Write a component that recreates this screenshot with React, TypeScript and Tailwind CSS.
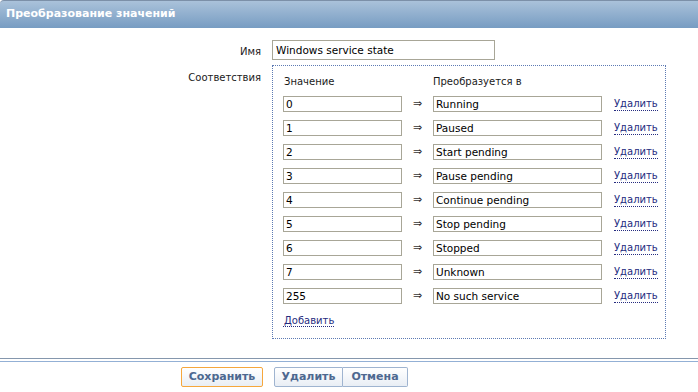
import React from 'react';

const mappings = [
  { value: '0', label: 'Running' },
  { value: '1', label: 'Paused' },
  { value: '2', label: 'Start pending' },
  { value: '3', label: 'Pause pending' },
  { value: '4', label: 'Continue pending' },
  { value: '5', label: 'Stop pending' },
  { value: '6', label: 'Stopped' },
  { value: '7', label: 'Unknown' },
  { value: '255', label: 'No such service' },
];

const font = { fontFamily: '"DejaVu Sans", Verdana, sans-serif' };

const App = () => {
  return (
    <div className="w-[698px] h-[392px] bg-white text-[10px] text-[#1a1a1a] overflow-hidden" style={font}>
      {/* Header bar */}
      <div className="h-[28px] rounded-tl-[4px] border-t border-[#7c90a8] bg-gradient-to-b from-[#aac2da] to-[#779cc2] flex items-center px-[6px]">
        <span className="text-white font-bold text-[11px]">Преобразование значений</span>
      </div>

      {/* Form */}
      <div className="grid grid-cols-[261px_auto] gap-x-[11px] mt-[12px]">
        <div className="text-right pt-[4px]">Имя</div>
        <input
          readOnly
          value="Windows service state"
          className="w-[223px] h-[20px] border border-[#a8a697] px-[3px] text-[10.5px] text-black outline-none"
          style={font}
        />

        <div className="text-right pt-[5px] mt-[5px]">Соответствия</div>
        <div className="mt-[5px] w-[394px] h-[274px] border border-dotted border-[#5d7ab3] pl-[10px] pt-[7px]">
          <div className="flex h-[16px] items-center">
            <span className="w-[150px] pl-[1px]">Значение</span>
            <span>Преобразуется в</span>
          </div>
          <div className="flex flex-col gap-[8px] mt-[7px]">
            {mappings.map((m) => (
              <div key={m.value} className="flex items-center h-[16px]">
                <input
                  readOnly
                  value={m.value}
                  className="w-[119px] h-[16px] border border-[#a8a697] px-[2px] text-[10.5px] text-black outline-none"
                  style={font}
                />
                <span className="w-[31px] text-center text-[11px] text-[#333]">⇒</span>
                <input
                  readOnly
                  value={m.label}
                  className="w-[169px] h-[16px] border border-[#a8a697] px-[2px] text-[10.5px] text-black outline-none"
                  style={font}
                />
                <span className="ml-[12px] text-[#262c80] border-b border-dotted border-[#262c80] leading-[12px]">Удалить</span>
              </div>
            ))}
          </div>
          <div className="mt-[9px]">
            <span className="pl-[1px] text-[#262c80] border-b border-dotted border-[#262c80] leading-[12px]">Добавить</span>
          </div>
        </div>
      </div>

      {/* Footer lines */}
      <div className="mt-[19px] border-t border-[#8597ad] h-[3px]" />
      <div className="border-t border-[#93b0d5]" />

      {/* Buttons */}
      <div className="flex mt-[5px] pl-[181px]">
        <button className="w-[82px] h-[20px] rounded-[2px] border border-[#f6a73c] bg-gradient-to-b from-white to-[#e9eef5] text-[#4d6890] font-bold text-[11px]" style={font}>
          Сохранить
        </button>
        <div className="flex ml-[11px]">
          <button className="w-[69px] h-[20px] rounded-l-[2px] border border-[#9fb4d0] bg-gradient-to-b from-white to-[#e9eef5] text-[#4d6890] font-bold text-[11px]" style={font}>
            Удалить
          </button>
          <button className="w-[65px] h-[20px] rounded-r-[2px] border border-l-0 border-[#9fb4d0] bg-gradient-to-b from-white to-[#e9eef5] text-[#4d6890] font-bold text-[11px]" style={font}>
            Отмена
          </button>
        </div>
      </div>
    </div>
  );
};

export default App;
